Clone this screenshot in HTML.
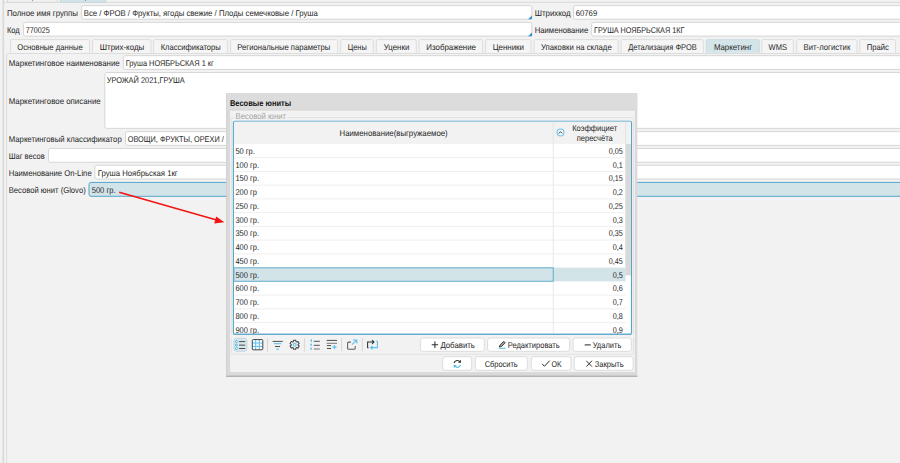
<!DOCTYPE html>
<html lang="ru"><head><meta charset="utf-8"><title>Весовые юниты</title><style>
html,body{margin:0;padding:0}
body{width:900px;height:463px;overflow:hidden;background:#f2f2f2;position:relative;font-family:"Liberation Sans", sans-serif;font-size:8.4px;color:#262626}
.t{position:absolute;white-space:pre;line-height:12px;transform-origin:0 50%;display:block;text-rendering:geometricPrecision}
svg.L{position:absolute;left:0;top:0;overflow:hidden}
</style></head><body>
<svg class="L" width="900" height="463" viewBox="0 0 900 463"><rect x="2.2" y="-1" width="0.9" height="465" fill="#e2e2e2"/><rect x="3.1" y="-1" width="1" height="465" fill="#d6d6d6"/><path d="M3.5 2.3L900 2.3" stroke="#d6d6d6" stroke-width="0.9" fill="none"/><rect x="7.4" y="-4" width="49.7" height="6.2" fill="#f2f2f2" stroke="#d6d6d6" stroke-width="0.9"/><rect x="60.4" y="-4" width="45.4" height="6.2" fill="#d3e4e9" stroke="#c5d6dc" stroke-width="0.9"/><rect x="32" y="-1" width="0.8" height="1.7" fill="#555"/><rect x="85" y="-1" width="0.8" height="1.7" fill="#555"/></svg>
<span class="t" style="left:6px;top:7px;transform:translate(0.90px,0.09px) scale(0.9375,1);">Полное имя группы</span>
<svg class="L" width="900" height="463" viewBox="0 0 900 463"><rect x="81.6" y="5.6" width="450.2" height="13.6" fill="#fff" stroke="#d3d3d3" stroke-width="0.9" rx="2"/><path d="M532 15.5V19.3H528.2Z" fill="#2b8fd0"/></svg>
<span class="t" style="left:83px;top:7px;transform:translate(0.70px,0.09px) scale(0.9273,1);">Все / ФРОВ / Фрукты, ягоды свежие / Плоды семечковые / Груша</span>
<span class="t" style="left:534px;top:7px;transform:translate(0.70px,0.09px) scale(0.9435,1);">Штрихкод</span>
<svg class="L" width="900" height="463" viewBox="0 0 900 463"><rect x="573.6" y="5.6" width="336.4" height="13.6" fill="#fff" stroke="#d3d3d3" stroke-width="0.9" rx="2"/></svg>
<span class="t" style="left:575px;top:7px;transform:translate(0.70px,0.09px) scale(0.9229,1);">60769</span>
<span class="t" style="left:6px;top:23px;transform:translate(0.90px,0.89px) scale(0.8982,1);">Код</span>
<svg class="L" width="900" height="463" viewBox="0 0 900 463"><rect x="23.5" y="22.4" width="508.3" height="13.7" fill="#fff" stroke="#d3d3d3" stroke-width="0.9" rx="2"/><path d="M532 32.4V36.2H528.2Z" fill="#2b8fd0"/></svg>
<span class="t" style="left:25px;top:23px;transform:translate(0.70px,0.89px) scale(0.8586,1);">770025</span>
<span class="t" style="left:534px;top:23px;transform:translate(0.70px,0.89px) scale(0.9214,1);">Наименование</span>
<svg class="L" width="900" height="463" viewBox="0 0 900 463"><rect x="591.6" y="22.4" width="318.4" height="13.7" fill="#fff" stroke="#d3d3d3" stroke-width="0.9" rx="2"/></svg>
<span class="t" style="left:594px;top:23px;transform:translate(0.00px,0.89px) scale(0.8630,1);">ГРУША НОЯБРЬСКАЯ 1КГ</span>
<svg class="L" width="900" height="463" viewBox="0 0 900 463"><path d="M10.6 52.8V41.1Q10.6 39.6 12.1 39.6H88.1Q89.6 39.6 89.6 41.1V52.8" fill="#f5f5f5" stroke="#dadada" stroke-width="0.9"/><path d="M92.6 52.8V41.1Q92.6 39.6 94.1 39.6H149.5Q151 39.6 151 41.1V52.8" fill="#f5f5f5" stroke="#dadada" stroke-width="0.9"/><path d="M153.6 52.8V41.1Q153.6 39.6 155.1 39.6H226.1Q227.6 39.6 227.6 41.1V52.8" fill="#f5f5f5" stroke="#dadada" stroke-width="0.9"/><path d="M230.6 52.8V41.1Q230.6 39.6 232.1 39.6H336.2Q337.7 39.6 337.7 41.1V52.8" fill="#f5f5f5" stroke="#dadada" stroke-width="0.9"/><path d="M340.7 52.8V41.1Q340.7 39.6 342.2 39.6H371.8Q373.3 39.6 373.3 41.1V52.8" fill="#f5f5f5" stroke="#dadada" stroke-width="0.9"/><path d="M376.3 52.8V41.1Q376.3 39.6 377.8 39.6H414.8Q416.3 39.6 416.3 41.1V52.8" fill="#f5f5f5" stroke="#dadada" stroke-width="0.9"/><path d="M419 52.8V41.1Q419 39.6 420.5 39.6H481.2Q482.7 39.6 482.7 41.1V52.8" fill="#f5f5f5" stroke="#dadada" stroke-width="0.9"/><path d="M485.6 52.8V41.1Q485.6 39.6 487.1 39.6H529.5Q531 39.6 531 41.1V52.8" fill="#f5f5f5" stroke="#dadada" stroke-width="0.9"/><path d="M534 52.8V41.1Q534 39.6 535.5 39.6H616.8Q618.3 39.6 618.3 41.1V52.8" fill="#f5f5f5" stroke="#dadada" stroke-width="0.9"/><path d="M621 52.8V41.1Q621 39.6 622.5 39.6H701.7Q703.2 39.6 703.2 41.1V52.8" fill="#f5f5f5" stroke="#dadada" stroke-width="0.9"/><path d="M706.3 52.8V41.1Q706.3 39.6 707.8 39.6H757.8Q759.3 39.6 759.3 41.1V52.8" fill="#d4e5ea" stroke="#c9dbe2" stroke-width="0.9"/><path d="M761.8 52.8V41.1Q761.8 39.6 763.3 39.6H791.9Q793.4 39.6 793.4 41.1V52.8" fill="#f5f5f5" stroke="#dadada" stroke-width="0.9"/><path d="M796.6 52.8V41.1Q796.6 39.6 798.1 39.6H855.5Q857 39.6 857 41.1V52.8" fill="#f5f5f5" stroke="#dadada" stroke-width="0.9"/><path d="M859.7 52.8V41.1Q859.7 39.6 861.2 39.6H894Q895.5 39.6 895.5 41.1V52.8" fill="#f5f5f5" stroke="#dadada" stroke-width="0.9"/><path d="M6.7 464V55.3Q6.7 53.5 8.5 53.5H900" fill="none" stroke="#dadada" stroke-width="0.9"/></svg>
<span class="t" style="left:17px;top:40px;transform:translate(0.30px,0.89px) scale(0.9141,1);">Основные данные</span>
<span class="t" style="left:99px;top:40px;transform:translate(0.70px,0.89px) scale(0.9496,1);">Штрих-коды</span>
<span class="t" style="left:160px;top:40px;transform:translate(0.70px,0.89px) scale(0.9029,1);">Классификаторы</span>
<span class="t" style="left:237px;top:40px;transform:translate(0.30px,0.89px) scale(0.9154,1);">Региональные параметры</span>
<span class="t" style="left:347px;top:40px;transform:translate(0.70px,0.89px) scale(0.8837,1);">Цены</span>
<span class="t" style="left:383px;top:40px;transform:translate(0.70px,0.89px) scale(0.9384,1);">Уценки</span>
<span class="t" style="left:426px;top:40px;transform:translate(0.30px,0.89px) scale(0.9419,1);">Изображение</span>
<span class="t" style="left:492px;top:40px;transform:translate(0.70px,0.89px) scale(0.9449,1);">Ценники</span>
<span class="t" style="left:541px;top:40px;transform:translate(0.00px,0.89px) scale(0.9263,1);">Упаковки на складе</span>
<span class="t" style="left:628px;top:40px;transform:translate(0.30px,0.89px) scale(0.8914,1);">Детализация ФРОВ</span>
<span class="t" style="left:713px;top:40px;transform:translate(0.90px,0.89px) scale(0.9357,1);">Маркетинг</span>
<span class="t" style="left:768px;top:40px;transform:translate(0.60px,0.89px) scale(0.8989,1);">WMS</span>
<span class="t" style="left:803px;top:40px;transform:translate(0.60px,0.89px) scale(0.9222,1);">Вит-логистик</span>
<span class="t" style="left:866px;top:40px;transform:translate(0.70px,0.89px) scale(0.9172,1);">Прайс</span>
<span class="t" style="left:8px;top:57px;transform:translate(0.70px,0.19px) scale(0.9421,1);">Маркетинговое наименование</span>
<svg class="L" width="900" height="463" viewBox="0 0 900 463"><rect x="123.4" y="55.7" width="786.6" height="13.75" fill="#fff" stroke="#d3d3d3" stroke-width="0.9" rx="2"/></svg>
<span class="t" style="left:125px;top:57px;transform:translate(0.70px,0.19px) scale(0.8806,1);">Груша НОЯБРЬСКАЯ 1 кг</span>
<svg class="L" width="900" height="463" viewBox="0 0 900 463"><rect x="104.8" y="72.5" width="805.2" height="55.9" fill="#fff" stroke="#d3d3d3" stroke-width="0.9" rx="2"/></svg>
<span class="t" style="left:106px;top:73px;transform:translate(0.70px,0.89px) scale(0.8843,1);">УРОЖАЙ 2021,ГРУША</span>
<span class="t" style="left:8px;top:95px;transform:translate(0.70px,0.29px) scale(0.9400,1);">Маркетинговое описание</span>
<span class="t" style="left:8px;top:133px;transform:translate(0.70px,0.09px) scale(0.9265,1);">Маркетинговый классификатор</span>
<svg class="L" width="900" height="463" viewBox="0 0 900 463"><rect x="125.5" y="131.6" width="784.5" height="13.75" fill="#fff" stroke="#d3d3d3" stroke-width="0.9" rx="2"/></svg>
<span class="t" style="left:127px;top:133px;transform:translate(0.70px,0.09px) scale(0.8730,1);">ОВОЩИ, ФРУКТЫ, ОРЕХИ /</span>
<span class="t" style="left:8px;top:149px;transform:translate(0.70px,0.99px) scale(0.8972,1);">Шаг весов</span>
<svg class="L" width="900" height="463" viewBox="0 0 900 463"><rect x="48.5" y="148.5" width="861.5" height="13.75" fill="#fff" stroke="#d3d3d3" stroke-width="0.9" rx="2"/></svg>
<span class="t" style="left:8px;top:166px;transform:translate(0.70px,0.79px) scale(0.9203,1);">Наименование On-Line</span>
<svg class="L" width="900" height="463" viewBox="0 0 900 463"><rect x="94.9" y="165.3" width="815.1" height="13.75" fill="#fff" stroke="#d3d3d3" stroke-width="0.9" rx="2"/></svg>
<span class="t" style="left:97px;top:166px;transform:translate(0.70px,0.79px) scale(0.9247,1);">Груша Ноябрьская 1кг</span>
<span class="t" style="left:8px;top:183px;transform:translate(0.70px,0.89px) scale(0.9123,1);">Весовой юнит (Glovo)</span>
<svg class="L" width="900" height="463" viewBox="0 0 900 463"><rect x="89" y="182.4" width="821" height="13.9" fill="#d3e4e9" stroke="#56a5ca" stroke-width="1" rx="2"/></svg>
<span class="t" style="left:91px;top:183px;transform:translate(0.70px,0.89px) scale(0.9034,1);">500 гр.</span>
<svg class="L" width="900" height="463" viewBox="0 0 900 463"><path d="M119.2 192.2L217.5 220.2" fill="none" stroke="#f41414" stroke-width="1.6"/><path d="M224.4 222.2L214.2 223.4L216.2 216.6Z" fill="#f41414"/><rect x="226.2" y="93.1" width="411.1" height="283.9" fill="#d9d9d9"/><rect x="226.2" y="93.1" width="411.1" height="16.9" fill="#dcdcdc"/><path d="M226.5 93.1L226.5 377" stroke="#cdcdcd" stroke-width="0.7" fill="none"/><path d="M226.2 376.5L637.3 376.5" stroke="#b4b4b4" stroke-width="1" fill="none"/><path d="M226.2 375.5L637.3 375.5" stroke="#c8c8c8" stroke-width="1" fill="none"/><rect x="230.1" y="110" width="404.8" height="262.1" fill="#f2f2f2"/><path d="M230.1 110.1L634.9 110.1" stroke="#d0d0d0" stroke-width="0.8" fill="none"/></svg>
<span class="t" style="left:229px;top:97px;transform:translate(0.90px,0.39px) scale(0.8978,1);color:#111;font-weight:bold;">Весовые юниты</span>
<svg class="L" width="900" height="463" viewBox="0 0 900 463"><rect x="231.6" y="117.5" width="401.9" height="236.8" fill="none" stroke="#e0e0e0" stroke-width="0.9" rx="2"/><rect x="234.3" y="113" width="53.2" height="7" fill="#f2f2f2"/></svg>
<span class="t" style="left:235px;top:110px;transform:translate(0.60px,0.49px) scale(0.9227,1);color:#a3a3a3;">Весовой юнит</span>
<svg class="L" width="900" height="463" viewBox="0 0 900 463"><rect x="233.4" y="121.3" width="398.1" height="213" fill="#fff" stroke="#56a5ca" stroke-width="1.1" rx="1.5"/><rect x="233.95" y="121.85" width="397" height="22.15" fill="#f2f2f2" rx="1"/><path d="M553.2 121.8L553.2 333.8" stroke="#e4e4e4" stroke-width="0.9" fill="none"/><path d="M625.6 121.8L625.6 144" stroke="#e0e0e0" stroke-width="0.9" fill="none"/></svg>
<span class="t" style="left:339px;top:127px;transform:translate(0.50px,0.19px) scale(0.9328,1);">Наименование(выгружаемое)</span>
<span class="t" style="left:572px;top:122px;transform:translate(0.20px,0.19px) scale(0.9006,1);">Коэффициет</span>
<span class="t" style="left:576px;top:132px;transform:translate(0.70px,0.09px) scale(0.8993,1);">пересчёта</span>
<svg class="L" width="900" height="463" viewBox="0 0 900 463"><circle cx="560.5" cy="132.5" r="3.45" fill="#f6f6f6" stroke="#6cc6ee" stroke-width="1.1"/><path d="M558.8 133.4L560.5 131.7L562.2 133.4" stroke="#3c3c3c" stroke-width="1" fill="none"/><rect x="625.3" y="144" width="5.65" height="131.3" fill="#d9d9d9"/><path d="M233.95 157.65L625.6 157.65" stroke="#ececec" stroke-width="0.9" fill="none"/><path d="M233.95 171.39L625.6 171.39" stroke="#ececec" stroke-width="0.9" fill="none"/><path d="M233.95 185.14L625.6 185.14" stroke="#ececec" stroke-width="0.9" fill="none"/><path d="M233.95 198.88L625.6 198.88" stroke="#ececec" stroke-width="0.9" fill="none"/><path d="M233.95 212.62L625.6 212.62" stroke="#ececec" stroke-width="0.9" fill="none"/><path d="M233.95 226.37L625.6 226.37" stroke="#ececec" stroke-width="0.9" fill="none"/><path d="M233.95 240.12L625.6 240.12" stroke="#ececec" stroke-width="0.9" fill="none"/><path d="M233.95 253.86L625.6 253.86" stroke="#ececec" stroke-width="0.9" fill="none"/><rect x="233.95" y="267.61" width="391.65" height="13.75" fill="#d3e4e9"/><rect x="233.9" y="267.81" width="319.3" height="13.44" fill="none" stroke="#56a5ca" stroke-width="0.9"/><path d="M233.95 295.1L625.6 295.1" stroke="#ececec" stroke-width="0.9" fill="none"/><path d="M233.95 308.84L625.6 308.84" stroke="#ececec" stroke-width="0.9" fill="none"/><path d="M233.95 322.59L625.6 322.59" stroke="#ececec" stroke-width="0.9" fill="none"/></svg>
<span class="t" style="left:235px;top:144px;transform:translate(0.40px,0.99px) scale(0.8950,1);">50 гр.</span>
<span class="t" style="left:608px;top:144px;transform:translate(0.74px,0.99px) scale(0.8620,1);">0,05</span>
<span class="t" style="left:235px;top:158px;transform:translate(0.40px,0.73px) scale(0.8950,1);">100 гр.</span>
<span class="t" style="left:612px;top:158px;transform:translate(0.75px,0.73px) scale(0.8620,1);">0,1</span>
<span class="t" style="left:235px;top:172px;transform:translate(0.40px,0.48px) scale(0.8950,1);">150 гр.</span>
<span class="t" style="left:608px;top:172px;transform:translate(0.74px,0.48px) scale(0.8620,1);">0,15</span>
<span class="t" style="left:235px;top:186px;transform:translate(0.40px,0.22px) scale(0.8950,1);">200 гр</span>
<span class="t" style="left:612px;top:186px;transform:translate(0.75px,0.22px) scale(0.8620,1);">0,2</span>
<span class="t" style="left:235px;top:199px;transform:translate(0.40px,0.97px) scale(0.8950,1);">250 гр.</span>
<span class="t" style="left:608px;top:199px;transform:translate(0.74px,0.97px) scale(0.8620,1);">0,25</span>
<span class="t" style="left:235px;top:213px;transform:translate(0.40px,0.71px) scale(0.8950,1);">300 гр.</span>
<span class="t" style="left:612px;top:213px;transform:translate(0.75px,0.71px) scale(0.8620,1);">0,3</span>
<span class="t" style="left:235px;top:227px;transform:translate(0.40px,0.46px) scale(0.8950,1);">350 гр.</span>
<span class="t" style="left:608px;top:227px;transform:translate(0.74px,0.46px) scale(0.8620,1);">0,35</span>
<span class="t" style="left:235px;top:241px;transform:translate(0.40px,0.20px) scale(0.8950,1);">400 гр.</span>
<span class="t" style="left:612px;top:241px;transform:translate(0.75px,0.20px) scale(0.8620,1);">0,4</span>
<span class="t" style="left:235px;top:254px;transform:translate(0.40px,0.95px) scale(0.8950,1);">450 гр.</span>
<span class="t" style="left:608px;top:254px;transform:translate(0.74px,0.95px) scale(0.8620,1);">0,45</span>
<span class="t" style="left:235px;top:268px;transform:translate(0.40px,0.69px) scale(0.8950,1);">500 гр.</span>
<span class="t" style="left:612px;top:268px;transform:translate(0.75px,0.69px) scale(0.8620,1);">0,5</span>
<span class="t" style="left:235px;top:282px;transform:translate(0.40px,0.44px) scale(0.8950,1);">600 гр.</span>
<span class="t" style="left:612px;top:282px;transform:translate(0.75px,0.44px) scale(0.8620,1);">0,6</span>
<span class="t" style="left:235px;top:296px;transform:translate(0.40px,0.18px) scale(0.8950,1);">700 гр.</span>
<span class="t" style="left:612px;top:296px;transform:translate(0.75px,0.18px) scale(0.8620,1);">0,7</span>
<span class="t" style="left:235px;top:309px;transform:translate(0.40px,0.93px) scale(0.8950,1);">800 гр.</span>
<span class="t" style="left:612px;top:309px;transform:translate(0.75px,0.93px) scale(0.8620,1);">0,8</span>
<span class="t" style="left:235px;top:323px;transform:translate(0.40px,0.67px) scale(0.8950,1);">900 гр.</span>
<span class="t" style="left:612px;top:323px;transform:translate(0.75px,0.67px) scale(0.8620,1);">0,9</span>
<svg class="L" width="900" height="463" viewBox="0 0 900 463"><rect x="230.1" y="334.85" width="404.8" height="2.65" fill="#f2f2f2"/><path d="M233.4 334.3L631.5 334.3" stroke="#56a5ca" stroke-width="1.1" fill="none"/><rect x="233.9" y="338.3" width="13" height="13" fill="#d6e7ec" stroke="#c3d6dc" stroke-width="0.9" rx="2.5"/><g transform="translate(230 334)"><g fill="#e8f5fb" stroke="#4db4e6" stroke-width="0.9"><circle cx="6.4" cy="7.5" r="1"/><circle cx="6.4" cy="11.05" r="1"/><circle cx="6.4" cy="14.45" r="1"/></g><g stroke="#4a4a4a" stroke-width="1"><path d="M9.1 7.6H15.2M9.1 11.15H15.2M9.1 14.5H15.2"/></g><rect x="22.3" y="5.6" width="10.5" height="10.2" fill="#fff"/><g stroke="#56bdf0" stroke-width="1"><path d="M25.7 5.6V15.8M29.3 5.6V15.8M22.3 9H32.8M22.3 12.4H32.8"/></g><rect x="22.3" y="5.6" width="10.5" height="10.2" rx="0.8" fill="none" stroke="#454545" stroke-width="1"/><g stroke="#d2d2d2" stroke-width="0.9"><path d="M37.5 4V17.5M74.4 4V17.5M111.6 4V17.5M132.4 4V17.5"/></g><g fill="none"><path d="M42.6 7.4H52.7M45 12.5H50" stroke="#444" stroke-width="0.95"/><path d="M43.9 9.65H51.2M46.3 15.1H48.8" stroke="#6cc8ee" stroke-width="1.2"/></g><g transform="translate(64.65 10.8)"><path d="M1.29 -3.20L1.22 -4.54L-1.22 -4.54L-1.29 -3.20L-2.12 -2.72L-3.32 -3.32L-4.54 -1.22L-3.42 -0.48L-3.42 0.48L-4.54 1.22L-3.32 3.32L-2.12 2.72L-1.29 3.20L-1.22 4.54L1.22 4.54L1.29 3.20L2.12 2.72L3.32 3.32L4.54 1.22L3.42 0.48L3.42 -0.48L4.54 -1.22L3.32 -3.32L2.12 -2.72Z" fill="none" stroke="#464646" stroke-width="1.05" stroke-linejoin="round"/><circle r="1.45" fill="#dff2fb" stroke="#6cc8ee" stroke-width="1.1"/></g><g fill="#5cc0ee"><path d="M80.2 6.3L81.3 5.3H82V8.1H80.9V6.6L80.2 7Z"/><rect x="80.3" y="9.5" width="1.6" height="2.3" rx="0.4"/><rect x="80.3" y="13.4" width="1.6" height="2.4" rx="0.4"/></g><g stroke="#737373" stroke-width="1.15"><path d="M83.8 7.4H89.8M83.8 11.3H89.8M83.8 15H89.8"/></g><path d="M96.7 6.4H107M96.9 11.6H101.1M96.9 14.5H101.1" stroke="#444" stroke-width="0.95"/><path d="M96.7 9.3H107" stroke="#6e6e6e" stroke-width="0.95"/><path d="M104.5 11.1V15.2M102.4 13.15H106.6" stroke="#5cc0ee" stroke-width="1.1"/><path d="M120.9 8.1H118.6Q117.6 8.1 117.6 9.1V14.3Q117.6 15.3 118.6 15.3H124.2Q125.2 15.3 125.2 14.3V11.9" fill="none" stroke="#5e5e5e" stroke-width="1.05"/><path d="M121.9 10.6L126.5 6.3M123 6H126.8V9.6" fill="none" stroke="#5cc0ee" stroke-width="1.05"/><path d="M138.6 13.7H137.6V8H143.4M142.1 6.2L144 8L142.1 9.8" fill="none" stroke="#333" stroke-width="1.05"/><path d="M146.2 7.3H147.4V13.6H140.9M142.6 11.8L140.6 13.6L142.6 15.4" fill="none" stroke="#5cc0ee" stroke-width="1.05"/></g><rect x="420.3" y="338" width="64" height="13.4" fill="#fff" stroke="#d9d9d9" stroke-width="0.9" rx="2.5"/><rect x="487.6" y="338" width="82" height="13.4" fill="#fff" stroke="#d9d9d9" stroke-width="0.9" rx="2.5"/><rect x="573.1" y="338" width="58.3" height="13.4" fill="#fff" stroke="#d9d9d9" stroke-width="0.9" rx="2.5"/><path d="M434.9 341.5V347.9M431.7 344.7H438.1" fill="none" stroke="#2e2e2e" stroke-width="1.05"/><path d="M499.3 347.1L499.9 345.2L503.8 341.3L505.3 342.8L501.4 346.6Z" fill="#9a9a9a" stroke="#2c2c2c" stroke-width="0.8"/><path d="M498.8 348.3H505.6" fill="none" stroke="#4db4e6" stroke-width="0.9"/><path d="M584.7 344.9H590.7" fill="none" stroke="#2e2e2e" stroke-width="1.05"/><rect x="442.7" y="356.7" width="29" height="13.6" fill="#fff" stroke="#d9d9d9" stroke-width="0.9" rx="2.5"/><rect x="475.3" y="356.7" width="52.1" height="13.6" fill="#fff" stroke="#d9d9d9" stroke-width="0.9" rx="2.5"/><rect x="531.3" y="356.7" width="39.7" height="13.6" fill="#fff" stroke="#d9d9d9" stroke-width="0.9" rx="2.5"/><rect x="574.3" y="356.7" width="58.9" height="13.6" fill="#fff" stroke="#d9d9d9" stroke-width="0.9" rx="2.5"/><g transform="translate(452.8 359.4)"><path d="M1.3 3.6A3.3 3.3 0 0 1 7.3 2.6M7.6 0.8V2.9H5.5" fill="none" stroke="#333" stroke-width="1.1"/><path d="M7.7 5.4A3.3 3.3 0 0 1 1.7 6.4M1.4 8.2V6.1H3.5" fill="none" stroke="#4db4e6" stroke-width="1.1"/></g><path d="M542.2 363.9L544.4 366.3L549.7 360.7" fill="none" stroke="#2e2e2e" stroke-width="1.0"/><path d="M586.3 360.8L592 366.6M592 360.8L586.3 366.6" fill="none" stroke="#2e2e2e" stroke-width="1.0"/></svg>
<span class="t" style="left:440px;top:339px;transform:translate(0.40px,0.09px) scale(0.9320,1);">Добавить</span>
<span class="t" style="left:507px;top:339px;transform:translate(0.70px,0.09px) scale(0.8987,1);">Редактировать</span>
<span class="t" style="left:592px;top:339px;transform:translate(0.70px,0.09px) scale(0.8942,1);">Удалить</span>
<span class="t" style="left:484px;top:358px;transform:translate(0.70px,0.09px) scale(0.8863,1);">Сбросить</span>
<span class="t" style="left:551px;top:358px;transform:translate(0.50px,0.09px) scale(0.8423,1);">OK</span>
<span class="t" style="left:594px;top:358px;transform:translate(0.70px,0.09px) scale(0.8988,1);">Закрыть</span>
</body></html>
